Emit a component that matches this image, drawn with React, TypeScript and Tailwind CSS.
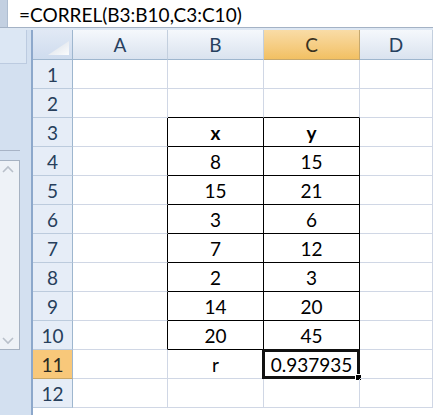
import React from "react";

const font = { fontFamily: 'Lato, "Liberation Sans", Arial, sans-serif' };

type Cell = { v?: string; bold?: boolean };

const data: Record<number, [Cell, Cell, Cell, Cell]> = {
  3: [{}, { v: "x", bold: true }, { v: "y", bold: true }, {}],
  4: [{}, { v: "8" }, { v: "15" }, {}],
  5: [{}, { v: "15" }, { v: "21" }, {}],
  6: [{}, { v: "3" }, { v: "6" }, {}],
  7: [{}, { v: "7" }, { v: "12" }, {}],
  8: [{}, { v: "2" }, { v: "3" }, {}],
  9: [{}, { v: "14" }, { v: "20" }, {}],
  10: [{}, { v: "20" }, { v: "45" }, {}],
  11: [{}, { v: "r" }, { v: "0.937935" }, {}],
};

function Chevron({ up }: { up?: boolean }) {
  return (
    <svg width="12" height="8" viewBox="0 0 12 8" className="block">
      <polyline
        points={up ? "1,7 6,2 11,7" : "1,1 6,6 11,1"}
        fill="none"
        stroke="#b9c0ca"
        strokeWidth="1.6"
      />
    </svg>
  );
}

export default function App() {
  const rows = Array.from({ length: 12 }, (_, i) => i + 1);
  const cols = ["A", "B", "C", "D"];
  return (
    <div className="w-[433px] h-[415px] overflow-hidden bg-white flex flex-col" style={font}>
      {/* formula bar */}
      <div className="h-[28px] flex border-b border-[#a4b2c5] shrink-0">
        <div className="w-[8px] bg-[#c3d0e1] border-r border-[#aebdd0]" />
        <div className="flex-1 flex items-end pb-[3px] pl-[11px] text-[19px] leading-[19px] text-black">
          =CORREL(B3:B10,C3:C10)
        </div>
      </div>
      <div className="h-[2px] bg-[#dde7f3] shrink-0" />
      {/* main */}
      <div className="flex flex-1 min-h-0">
        {/* left panel */}
        <div className="w-[33px] shrink-0 bg-[#d3e0f0] border-r-2 border-[#8da8cb] flex flex-col">
          <div className="h-[34px] w-[27px] bg-[#dce7f4] border-r border-b border-[#bccbe0]" />
          <div className="mt-[86px] h-px w-[20px] bg-[#a8b4c6]" />
          <div className="mt-[9px] h-[190px] w-[20px] bg-[#eef2f7] border border-l-0 border-[#a6b2c2] flex flex-col justify-between items-center pr-[4px] py-[4px]">
            <Chevron up />
            <Chevron />
          </div>
        </div>
        {/* grid */}
        <div className="grid grid-cols-[40px_95px_96px_96px_1fr] grid-rows-[30px_repeat(12,29px)] flex-1">
          {/* corner */}
          <div className="bg-gradient-to-b from-[#e1e9f5] to-[#cfdcee] border-r border-b border-[#9eb6ce] relative">
            <svg className="absolute right-[3px] bottom-[4px]" width="21" height="14" viewBox="0 0 21 14">
              <defs>
                <linearGradient id="tri" x1="0" y1="0" x2="1" y2="1">
                  <stop offset="0" stopColor="#d6dde6" />
                  <stop offset="1" stopColor="#fbfcfd" />
                </linearGradient>
              </defs>
              <polygon points="21,0 21,14 0,14" fill="url(#tri)" />
            </svg>
          </div>
          {cols.map((c) => (
            <div
              key={c}
              className={
                "flex items-end justify-center pb-[5px] text-[19px] leading-[19px] border-r border-b " +
                (c === "C"
                  ? "bg-gradient-to-b from-[#f9dca6] to-[#f2c062] border-[#c5a86e] text-[#3a3220]"
                  : "bg-gradient-to-b from-[#f5f8fc] to-[#dae3ef] border-r-[#c3cfde] border-b-[#9eb6ce] text-[#27405e]")
              }
            >
              {c}
            </div>
          ))}
          {rows.map((r) => {
            const rowData = data[r] || [{}, {}, {}, {}];
            return (
              <React.Fragment key={r}>
                <div
                  className={
                    "flex items-end justify-center pb-[4px] text-[19px] leading-[19px] border-r border-b " +
                    (r === 11
                      ? "bg-[#f8c87a] border-r-[#9eb6ce] border-b-[#c9a766] text-[#2a2a22]"
                      : "bg-[#e6edf7] border-r-[#9eb6ce] border-b-[#bccbdd] text-[#273f5c]")
                  }
                >
                  {r}
                </div>
                {rowData.map((cell, ci) => {
                  const inTable = r >= 3 && r <= 10 && (ci === 1 || ci === 2);
                  const rightBlack = inTable || (ci === 0 && r >= 3 && r <= 10);
                  const bottomBlack = inTable || (r === 2 && (ci === 1 || ci === 2));
                  const selected = r === 11 && ci === 2;
                  return (
                    <div
                      key={ci}
                      className={
                        "relative flex items-end justify-center pb-[4px] text-[19px] leading-[19px] text-black border-r border-b " +
                        (rightBlack ? "border-r-black " : "border-r-[#d0d7e5] ") +
                        (bottomBlack ? "border-b-black " : "border-b-[#d0d7e5] ") +
                        (cell.bold ? "font-bold" : "")
                      }
                    >
                      {cell.v}
                      {selected && (
                        <>
                          <div className="absolute left-[-2px] top-[-1px] right-[-1px] bottom-[-1px] border-[3px] border-[#111]" />
                          <div className="absolute right-[-3px] bottom-[-3px] w-[7px] h-[7px] bg-black border border-white" />
                        </>
                      )}
                    </div>
                  );
                })}
              </React.Fragment>
            );
          })}
        </div>
      </div>
    </div>
  );
}
